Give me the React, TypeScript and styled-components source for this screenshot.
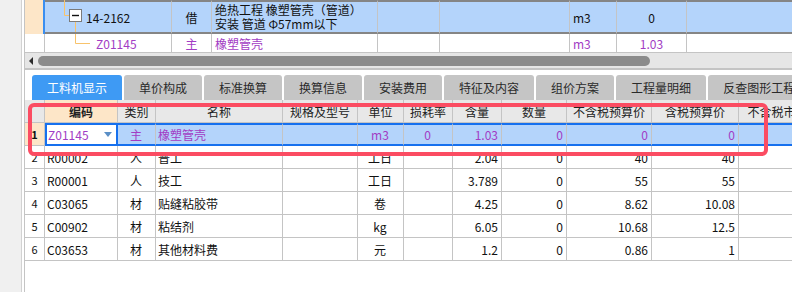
import React from "react";
import styled, { createGlobalStyle, css } from "styled-components";

const PURPLE = "#a23cc4";
const GRID = "#c4c4c4";
const BEIGE = "#fde6c8";
const SELECT = "#b4d4fb";
const BLUE = "#1670ee";
const ORANGE = "#f8c36b";

type Align = "left" | "center" | "right";

const GlobalStyle = createGlobalStyle`
  html, body { margin: 0; padding: 0; background: #fff; overflow: hidden; }
  body {
    font-family: "Noto Sans CJK SC", "Noto Sans", sans-serif;
    font-size: 12px;
    color: #1a1a1a;
  }
  * { box-sizing: border-box; }
`;

const justify = (a?: Align) =>
  a === "center" ? "center" : a === "right" ? "flex-end" : "flex-start";

const Page = styled.div`
  display: flex;
  width: 792px;
  height: 292px;
  overflow: hidden;
  background: #fff;
`;

const SideStrip = styled.div`
  flex: none;
  width: 22px;
  background: #f0f0f0;
  border-right: 1px solid #d2d2d2;
  margin-right: 2px;
`;

const Main = styled.div`
  flex: 1;
  min-width: 0;
  display: flex;
  flex-direction: column;
  border-left: 1px solid ${GRID};
  overflow: hidden;
`;

/* ---------- upper grid ---------- */
const TopGrid = styled.div`
  display: grid;
  grid-template-columns: 20px 127px 40px 166px 62px 130px 47px 70px 140px;
  grid-template-rows: 34px 19px;
  width: max-content;
`;

const TopCell = styled.div<{ $sel?: boolean; $align?: Align; $purple?: boolean }>`
  display: flex;
  align-items: center;
  justify-content: ${(p) => justify(p.$align)};
  padding: 0 3px;
  border-right: 1px solid ${GRID};
  white-space: nowrap;
  overflow: hidden;
  color: ${(p) => (p.$purple ? PURPLE : "#111")};
  ${(p) =>
    p.$sel
      ? css`
          background: ${SELECT};
          border-top: 2px solid #858585;
          border-bottom: 2px solid #858585;
        `
      : css`
          background: #fff;
          border-bottom: 1px solid ${GRID};
        `}
`;

const TopRowHead = styled.div<{ $sel?: boolean }>`
  ${(p) =>
    p.$sel
      ? css`
          background: ${BEIGE};
          border-right: 2px solid #3a8ef0;
        `
      : css`
          background: #fff;
          border-right: 1px solid ${GRID};
          border-bottom: 1px solid ${GRID};
        `}
`;

const TreeCell = styled(TopCell)`
  padding: 0;
  overflow: visible;
`;

const TreeSvg = styled.svg`
  flex: none;
  overflow: visible;
`;

const NameLines = styled(TopCell)`
  flex-direction: column;
  align-items: flex-start;
  justify-content: center;
  line-height: 14px;
`;

/* ---------- scrollbar ---------- */
const HScroll = styled.div`
  display: flex;
  align-items: center;
  gap: 5px;
  height: 15px;
  padding-left: 4px;
  background: #e6e6e6;
`;

const ScrollArrow = styled.span`
  width: 0;
  height: 0;
  border-top: 4px solid transparent;
  border-bottom: 4px solid transparent;
  border-right: 4px solid #2c2c2c;
`;

const ScrollThumb = styled.span`
  width: 612px;
  height: 10px;
  border-radius: 5px;
  background: #8b8b8b;
`;

const Separator = styled.div`
  height: 2px;
  background: #c4c4c4;
`;

/* ---------- tabs ---------- */
const TabBar = styled.div`
  display: flex;
  gap: 2px;
  height: 25px;
  margin-top: 5px;
  padding-left: 7px;
`;

const Tab = styled.div<{ $active?: boolean }>`
  display: flex;
  align-items: center;
  padding: 0 15px;
  white-space: nowrap;
  border-radius: 3px 3px 0 0;
  font-size: 12px;
  background: ${(p) => (p.$active ? "#3e9af4" : "#c5c5c5")};
  color: ${(p) => (p.$active ? "#fff" : "#2a2a2a")};
`;

/* ---------- lower table ---------- */
const Lower = styled.div`
  position: relative;
  flex: 1;
`;

const Table = styled.div`
  display: grid;
  grid-template-columns: 20px 73px 38px 127px 75px 46px 49px 49px 65px 85px 87px 90px;
  grid-auto-rows: 23px;
  width: max-content;
`;

const Cell = styled.div<{ $align?: Align; $purple?: boolean; $sel?: boolean }>`
  display: flex;
  align-items: center;
  justify-content: ${(p) => justify(p.$align)};
  padding: 0 3px 0 2px;
  border-right: 1px solid ${GRID};
  border-bottom: 1px solid ${GRID};
  white-space: nowrap;
  overflow: hidden;
  color: ${(p) => (p.$purple ? PURPLE : "#111")};
  ${(p) =>
    p.$sel &&
    css`
      background: ${SELECT};
      border-top: 2px solid ${BLUE};
      border-bottom: 2px solid ${BLUE};
    `}
`;

const HeadCell = styled(Cell)<{ $key?: boolean }>`
  justify-content: center;
  padding: 0;
  background: ${(p) => (p.$key ? BEIGE : "#e8e8e8")};
  font-weight: ${(p) => (p.$key ? 700 : 400)};
  color: #222;
`;

const RowNum = styled(Cell)<{ $active?: boolean }>`
  justify-content: center;
  padding: 0;
  font-size: 11px;
  background: ${(p) => (p.$active ? BEIGE : "#fff")};
  font-weight: ${(p) => (p.$active ? 700 : 400)};
`;

const Editor = styled.div`
  display: flex;
  align-items: center;
  justify-content: space-between;
  padding: 0 4px 0 1px;
  background: #fff;
  border: 2px solid ${BLUE};
  color: ${PURPLE};
`;

const DropArrow = styled.span`
  width: 0;
  height: 0;
  border-left: 4px solid transparent;
  border-right: 4px solid transparent;
  border-top: 5px solid #5b8fc6;
`;

const Annotation = styled.div`
  position: absolute;
  left: 3px;
  top: 3px;
  width: 740px;
  height: 53px;
  border: 4px solid #fb4c62;
  border-radius: 6px;
  pointer-events: none;
`;

const headers = [
  "",
  "编码",
  "类别",
  "名称",
  "规格及型号",
  "单位",
  "损耗率",
  "含量",
  "数量",
  "不含税预算价",
  "含税预算价",
  "不含税市场价",
];

const rows = [
  { n: 2, code: "R00002", cat: "人", name: "普工", unit: "工日", qty: "2.04", num: "0", p1: "40", p2: "40" },
  { n: 3, code: "R00001", cat: "人", name: "技工", unit: "工日", qty: "3.789", num: "0", p1: "55", p2: "55" },
  { n: 4, code: "C03065", cat: "材", name: "贴缝粘胶带", unit: "卷", qty: "4.25", num: "0", p1: "8.62", p2: "10.08" },
  { n: 5, code: "C00902", cat: "材", name: "粘结剂", unit: "kg", qty: "6.05", num: "0", p1: "10.68", p2: "12.5" },
  { n: 6, code: "C03653", cat: "材", name: "其他材料费", unit: "元", qty: "1.2", num: "0", p1: "0.86", p2: "1" },
];

const tabs = ["工料机显示", "单价构成", "标准换算", "换算信息", "安装费用", "特征及内容", "组价方案", "工程量明细", "反查图形工程量"];

export default function App() {
  return (
    <>
      <GlobalStyle />
      <Page>
        <SideStrip />
        <Main>
          <TopGrid>
            <TopRowHead $sel />
            <TreeCell $sel>
              <TreeSvg width={41} height={30} viewBox="0 0 41 30">
                <path d="M19.5 -2 V13.5 H24" fill="none" stroke={ORANGE} strokeWidth={1} />
                <path d="M30.5 19.5 V30" fill="none" stroke={ORANGE} strokeWidth={1} />
                <rect x={24.5} y={7.5} width={12} height={12} fill="#fff" stroke="#7a7a7a" />
                <path d="M27 13.5 H34" stroke="#111" strokeWidth={1.4} />
              </TreeSvg>
              <span>14-2162</span>
            </TreeCell>
            <TopCell $sel $align="center">借</TopCell>
            <NameLines $sel>
              <span>绝热工程 橡塑管壳（管道）</span>
              <span>安装 管道 Φ57mm以下</span>
            </NameLines>
            <TopCell $sel />
            <TopCell $sel />
            <TopCell $sel>m3</TopCell>
            <TopCell $sel $align="center">0</TopCell>
            <TopCell $sel />

            <TopRowHead />
            <TreeCell $purple>
              <TreeSvg width={51} height={18} viewBox="0 0 51 18">
                <path d="M30.5 0 V9.5 H45" fill="none" stroke={ORANGE} strokeWidth={1} />
              </TreeSvg>
              <span>Z01145</span>
            </TreeCell>
            <TopCell $align="center" $purple>主</TopCell>
            <TopCell $purple>橡塑管壳</TopCell>
            <TopCell />
            <TopCell />
            <TopCell $purple>m3</TopCell>
            <TopCell $align="center" $purple>1.03</TopCell>
            <TopCell />
          </TopGrid>

          <HScroll>
            <ScrollArrow />
            <ScrollThumb />
          </HScroll>
          <Separator />

          <TabBar>
            {tabs.map((t, i) => (
              <Tab key={t} $active={i === 0}>
                {t}
              </Tab>
            ))}
          </TabBar>

          <Lower>
            <Table>
              {headers.map((h, i) => (
                <HeadCell key={i} $key={i === 1}>
                  {h}
                </HeadCell>
              ))}

              <RowNum $active>1</RowNum>
              <Editor>
                <span>Z01145</span>
                <DropArrow />
              </Editor>
              <Cell $sel $purple $align="center">主</Cell>
              <Cell $sel $purple>橡塑管壳</Cell>
              <Cell $sel />
              <Cell $sel $purple $align="center">m3</Cell>
              <Cell $sel $purple $align="center">0</Cell>
              <Cell $sel $purple $align="right">1.03</Cell>
              <Cell $sel $purple $align="right">0</Cell>
              <Cell $sel $purple $align="right">0</Cell>
              <Cell $sel $purple $align="right">0</Cell>
              <Cell $sel />

              {rows.map((r) => (
                <React.Fragment key={r.n}>
                  <RowNum>{r.n}</RowNum>
                  <Cell>{r.code}</Cell>
                  <Cell $align="center">{r.cat}</Cell>
                  <Cell>{r.name}</Cell>
                  <Cell />
                  <Cell $align="center">{r.unit}</Cell>
                  <Cell />
                  <Cell $align="right">{r.qty}</Cell>
                  <Cell $align="right">{r.num}</Cell>
                  <Cell $align="right">{r.p1}</Cell>
                  <Cell $align="right">{r.p2}</Cell>
                  <Cell />
                </React.Fragment>
              ))}
            </Table>
            <Annotation />
          </Lower>
        </Main>
      </Page>
    </>
  );
}
